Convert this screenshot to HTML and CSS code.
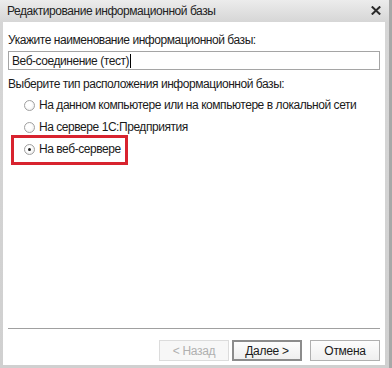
FILE: index.html
```html
<!DOCTYPE html>
<html lang="ru">
  <head>
    <meta charset="UTF-8" />
    <title>Редактирование информационной базы</title>
    <link rel="stylesheet" href="styles.css">
  </head>
  <body>
    <div class="window">
      <!-- Title bar -->
      <div class="titlebar">
        <span class="title">Редактирование информационной базы</span>
        <svg class="close" width="10" height="9" viewBox="0 0 10 9">
          <path d="M0.8 0.5 L9.2 8.5 M9.2 0.5 L0.8 8.5" stroke="#2a2a2a" stroke-width="2" />
        </svg>
      </div>

      <!-- Dialog body -->
      <div class="content">
        <div class="label">Укажите наименование информационной базы:</div>
        <div class="input">Веб-соединение (тест)<span class="caret"></span></div>

        <div class="label second">Выберите тип расположения информационной базы:</div>
        <div class="options">
          <div class="option"><span class="radio"></span>На данном компьютере или на компьютере в локальной сети</div>
          <div class="option"><span class="radio"></span>На сервере 1С:Предприятия</div>
          <div class="option marked"><span class="radio checked"></span>На веб-сервере</div>
        </div>

        <div class="spacer"></div>
        <div class="separator"></div>
        <div class="buttons">
          <div class="nav">
            <button class="btn" disabled>&lt; Назад</button>
            <button class="btn default">Далее &gt;</button>
          </div>
          <button class="btn">Отмена</button>
        </div>
      </div>
    </div>
  </body>
</html>
```

FILE: styles.css
```css
html,
body {
  margin: 0;
  width: 392px;
  height: 368px;
  overflow: hidden;
}
body {
  font-family: "Liberation Sans", Arial, sans-serif;
  font-size: 12px;
  letter-spacing: -0.45px;
  color: #1a1a1a;
  background: linear-gradient(#ececec, #d6d6d6 22px, #d0d0d0);
}
.window {
  display: flex;
  flex-direction: column;
  height: 368px;
  padding: 0 4px 3px 3px;
  box-sizing: border-box;
  border-right: 3px solid #a8a8a8;
}
.titlebar {
  height: 22px;
  display: flex;
  align-items: center;
  justify-content: space-between;
  padding: 0 4px 1px 4px;
  box-sizing: border-box;
  flex-shrink: 0;
}
.title {
  color: #222;
}
.close {
  display: block;
}
.content {
  flex: 1;
  display: flex;
  flex-direction: column;
  background: #fff;
  padding: 10px 5px 4px 5px;
}
.label {
  line-height: 16px;
}
.label.second {
  margin-top: 6px;
}
.input {
  margin-top: 3px;
  height: 19px;
  box-sizing: border-box;
  border: 1px solid #a5a5a5;
  padding: 0 3px;
  display: flex;
  align-items: center;
}
.caret {
  display: inline-block;
  width: 1px;
  height: 14px;
  background: #000;
  margin-left: 1px;
}
.options {
  margin-top: 2px;
  padding-left: 16px;
  display: flex;
  flex-direction: column;
}
.option {
  height: 22px;
  display: flex;
  align-items: center;
  position: relative;
}
.radio {
  width: 11px;
  height: 11px;
  box-sizing: border-box;
  border: 1px solid #a0a0a0;
  border-radius: 50%;
  background: radial-gradient(circle at 40% 40%, #fff 35%, #e6e6e6);
  margin-right: 4px;
  position: relative;
  flex-shrink: 0;
}
.radio.checked::after {
  content: "";
  position: absolute;
  left: 3px;
  top: 3px;
  width: 3px;
  height: 3px;
  border-radius: 50%;
  background: #222;
}
.marked::before {
  content: "";
  position: absolute;
  left: -13px;
  top: -3px;
  width: 117px;
  height: 30px;
  box-sizing: border-box;
  border: 3px solid #d8232f;
}
.spacer {
  flex: 1;
}
.separator {
  height: 1px;
  background: #a0a0a0;
  margin: 0 0 11px 0;
}
.buttons {
  display: flex;
  justify-content: flex-end;
  gap: 8px;
}
.nav {
  display: flex;
  gap: 3px;
}
.btn {
  width: 70px;
  height: 21px;
  font-family: "Liberation Sans", Arial, sans-serif;
  font-size: 12px;
  letter-spacing: -0.3px;
  color: #1a1a1a;
  background: linear-gradient(#fdfdfd, #efefef);
  border: 1px solid #b0b0b0;
  padding: 0;
}
.btn:disabled {
  color: #b0b0b0;
  border-color: #dcdcdc;
  background: #f7f7f7;
}
.btn.default {
  border: 2px solid #8c8c8c;
}
```
